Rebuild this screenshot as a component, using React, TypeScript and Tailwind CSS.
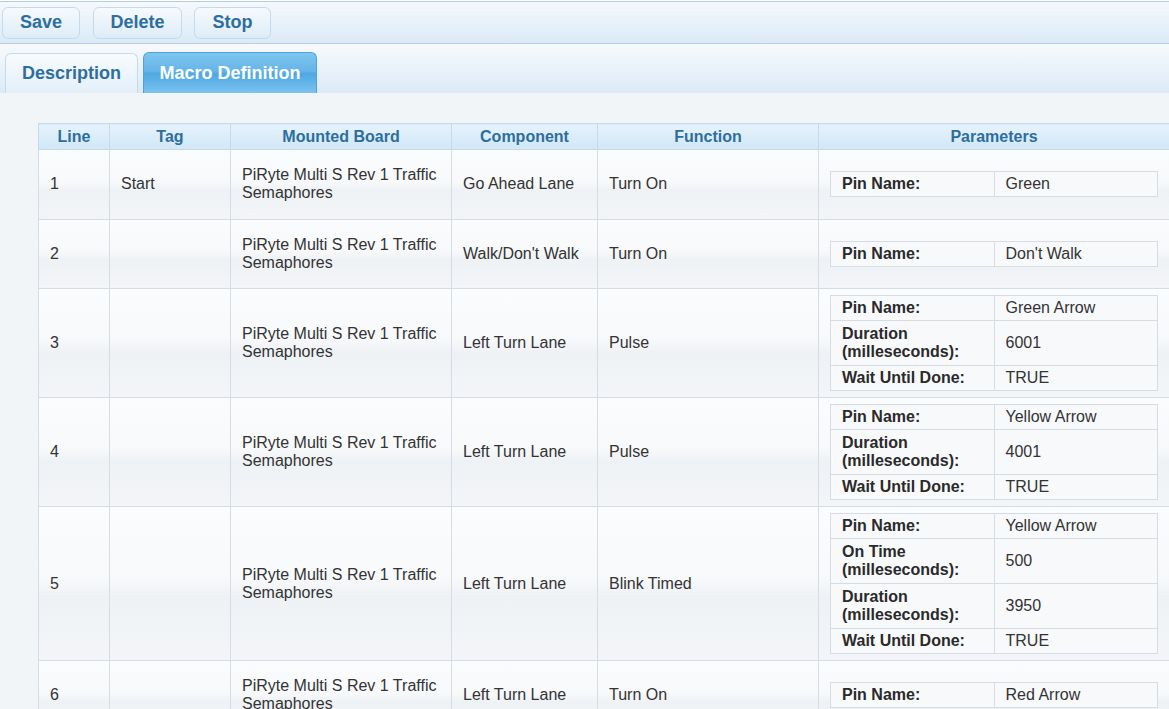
import React from "react";

type Param = [string, string];
type Row = { line: string; tag: string; board: string; comp: string; fn: string; params: Param[] };

const board = "PiRyte Multi S Rev 1 Traffic Semaphores";
const rows: Row[] = [
  { line: "1", tag: "Start", board, comp: "Go Ahead Lane", fn: "Turn On", params: [["Pin Name:", "Green"]] },
  { line: "2", tag: "", board, comp: "Walk/Don't Walk", fn: "Turn On", params: [["Pin Name:", "Don't Walk"]] },
  {
    line: "3", tag: "", board, comp: "Left Turn Lane", fn: "Pulse",
    params: [["Pin Name:", "Green Arrow"], ["Duration (milleseconds):", "6001"], ["Wait Until Done:", "TRUE"]],
  },
  {
    line: "4", tag: "", board, comp: "Left Turn Lane", fn: "Pulse",
    params: [["Pin Name:", "Yellow Arrow"], ["Duration (milleseconds):", "4001"], ["Wait Until Done:", "TRUE"]],
  },
  {
    line: "5", tag: "", board, comp: "Left Turn Lane", fn: "Blink Timed",
    params: [
      ["Pin Name:", "Yellow Arrow"],
      ["On Time (milleseconds):", "500"],
      ["Duration (milleseconds):", "3950"],
      ["Wait Until Done:", "TRUE"],
    ],
  },
  { line: "6", tag: "", board, comp: "Left Turn Lane", fn: "Turn On", params: [["Pin Name:", "Red Arrow"]] },
];

const btn =
  "h-[32px] rounded-[6px] border border-[#c5dbec] bg-[linear-gradient(#f6fafd,#deecf8)] text-[18px] font-bold text-[#2e6e9e] flex items-center justify-center";

const td = "border border-[#d6dce3] px-[11px] py-[16px] align-middle text-[16px] leading-[18px] text-[#333]";
const th =
  "border border-[#c5dbec] h-[26px] p-0 text-center text-[16px] font-bold text-[#2e6e9e] bg-[linear-gradient(#e6f3fc,#d0e7f7)]";

export default function App() {
  return (
    <div className="min-h-[709px] bg-[#f2f5f8]" style={{ fontFamily: '"Liberation Sans", Arial, sans-serif' }}>
      {/* toolbar */}
      <div className="mt-[1px] h-[43px] border-t border-b border-[#b7cde0] bg-[linear-gradient(#f5f9fc,#dbeaf7)] flex items-center pl-[2px] gap-[12px]">
        <button className={btn + " w-[78px]"}>Save</button>
        <button className={btn + " w-[89px] ml-[1px]"}>Delete</button>
        <button className={btn + " w-[77px]"}>Stop</button>
      </div>
      {/* tabs */}
      <div className="h-[49px] bg-[linear-gradient(#f7fafd,#dceaf6)] flex items-end pl-[5px] gap-[5px]">
        <div className="h-[40px] w-[133px] rounded-t-[6px] border border-b-0 border-[#c5dbec] bg-[linear-gradient(#f8fbfe,#e3eff9)] flex items-center justify-center text-[18px] font-bold text-[#2e6e9e]">
          Description
        </div>
        <div className="h-[41px] w-[174px] rounded-t-[6px] border border-b-0 border-[#4ea3da] bg-[linear-gradient(#7ec5ef_0%,#66b5e8_45%,#4ea8e2_52%,#7cc2ee_100%)] flex items-center justify-center text-[18px] font-bold text-white">
          Macro Definition
        </div>
      </div>
      {/* content */}
      <div className="pt-[30px] pl-[38px]">
        <table className="table-fixed border-collapse w-[1131px]">
          <colgroup>
            <col className="w-[71px]" />
            <col className="w-[121px]" />
            <col className="w-[221px]" />
            <col className="w-[146px]" />
            <col className="w-[221px]" />
            <col className="w-[351px]" />
          </colgroup>
          <thead>
            <tr>
              <th className={th}>Line</th>
              <th className={th}>Tag</th>
              <th className={th}>Mounted Board</th>
              <th className={th}>Component</th>
              <th className={th}>Function</th>
              <th className={th}>Parameters</th>
            </tr>
          </thead>
          <tbody>
            {rows.map((r) => (
              <tr
                key={r.line}
                className="h-[69.5px] bg-[linear-gradient(#fbfcfd_0%,#f8f9fb_45%,#eff2f5_58%,#f3f5f8_100%)]"
              >
                <td className={td}>{r.line}</td>
                <td className={td}>{r.tag}</td>
                <td className={td}>{r.board}</td>
                <td className={td}>{r.comp}</td>
                <td className={td}>{r.fn}</td>
                <td className="border border-[#d6dce3] px-[11px] py-[6px] align-middle">
                  <table className="table-fixed border-collapse w-full bg-[#f8f9fb]">
                    <tbody>
                      {r.params.map(([k, v]) => {
                        const two = k.includes("(");
                        return (
                          <tr key={k} className={two ? "h-[45px]" : "h-[25px]"}>
                            <td className="w-1/2 border border-[#d6dce3] px-[11px] py-0 text-[16px] leading-[18px] font-bold text-[#2a2a2a] align-middle">
                              {k}
                            </td>
                            <td className="w-1/2 border border-[#d6dce3] px-[11px] py-0 text-[16px] leading-[18px] text-[#333] align-middle">
                              {v}
                            </td>
                          </tr>
                        );
                      })}
                    </tbody>
                  </table>
                </td>
              </tr>
            ))}
          </tbody>
        </table>
      </div>
    </div>
  );
}
